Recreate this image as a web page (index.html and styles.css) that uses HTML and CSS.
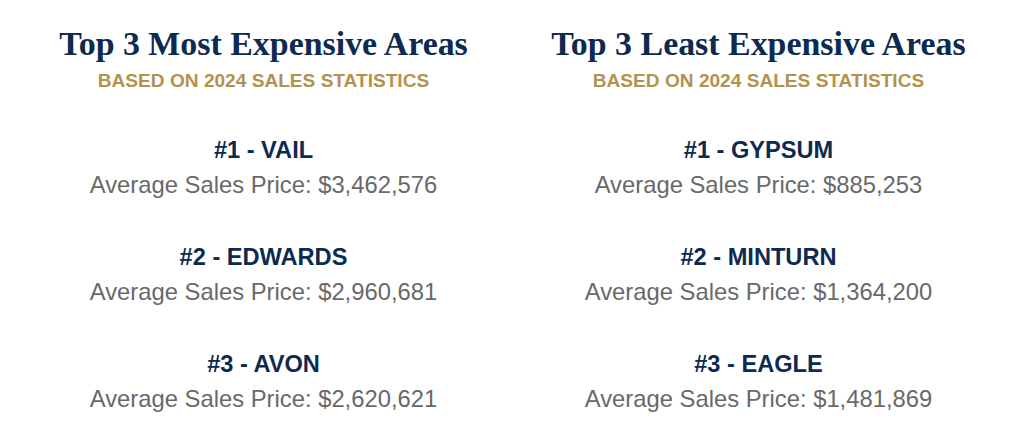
FILE: index.html
```html
<!DOCTYPE html>
<html lang="en">
<head>
<meta charset="utf-8">
<title>Top 3 Areas</title>
<link rel="stylesheet" href="styles.css">
</head>
<body>
<main class="page">
  <section class="col">
    <h2 class="title">Top 3 Most Expensive Areas</h2>
    <p class="sub">BASED ON 2024 SALES STATISTICS</p>
    <div class="list">
      <div class="item"><h3 class="name">#1 - VAIL</h3><p class="price">Average Sales Price: $3,462,576</p></div>
      <div class="item"><h3 class="name">#2 - EDWARDS</h3><p class="price">Average Sales Price: $2,960,681</p></div>
      <div class="item"><h3 class="name">#3 - AVON</h3><p class="price">Average Sales Price: $2,620,621</p></div>
    </div>
  </section>
  <section class="col">
    <h2 class="title">Top 3 Least Expensive Areas</h2>
    <p class="sub">BASED ON 2024 SALES STATISTICS</p>
    <div class="list">
      <div class="item"><h3 class="name">#1 - GYPSUM</h3><p class="price">Average Sales Price: $885,253</p></div>
      <div class="item"><h3 class="name">#2 - MINTURN</h3><p class="price">Average Sales Price: $1,364,200</p></div>
      <div class="item"><h3 class="name">#3 - EAGLE</h3><p class="price">Average Sales Price: $1,481,869</p></div>
    </div>
  </section>
</main>
</body>
</html>
```
FILE: styles.css
```css
html, body {
  margin: 0;
  padding: 0;
  background: #ffffff;
}
.page {
  display: grid;
  grid-template-columns: 1fr 1fr;
  padding: 24px 18px 0 16px;
  text-align: center;
}
.col {
  display: flex;
  flex-direction: column;
  align-items: center;
}
.title {
  margin: 0;
  font-family: "Liberation Serif", "Times New Roman", serif;
  font-weight: 700;
  font-size: 33.9px;
  line-height: 40px;
  color: #0d2a50;
}
.sub {
  margin: 5px 0 0;
  font-family: "Liberation Sans", Arial, sans-serif;
  font-weight: 700;
  font-size: 19.1px;
  line-height: 23px;
  color: #b3924e;
}
.list {
  display: flex;
  flex-direction: column;
  gap: 44px;
  margin-top: 44px;
}
.item {
  display: flex;
  flex-direction: column;
  gap: 7px;
}
.name {
  margin: 0;
  font-family: "Liberation Sans", Arial, sans-serif;
  font-weight: 700;
  font-size: 23.6px;
  line-height: 28px;
  color: #0d2a50;
}
.price {
  margin: 0;
  font-family: "Liberation Sans", Arial, sans-serif;
  font-weight: 400;
  font-size: 23.8px;
  line-height: 28px;
  color: #696969;
}
```
